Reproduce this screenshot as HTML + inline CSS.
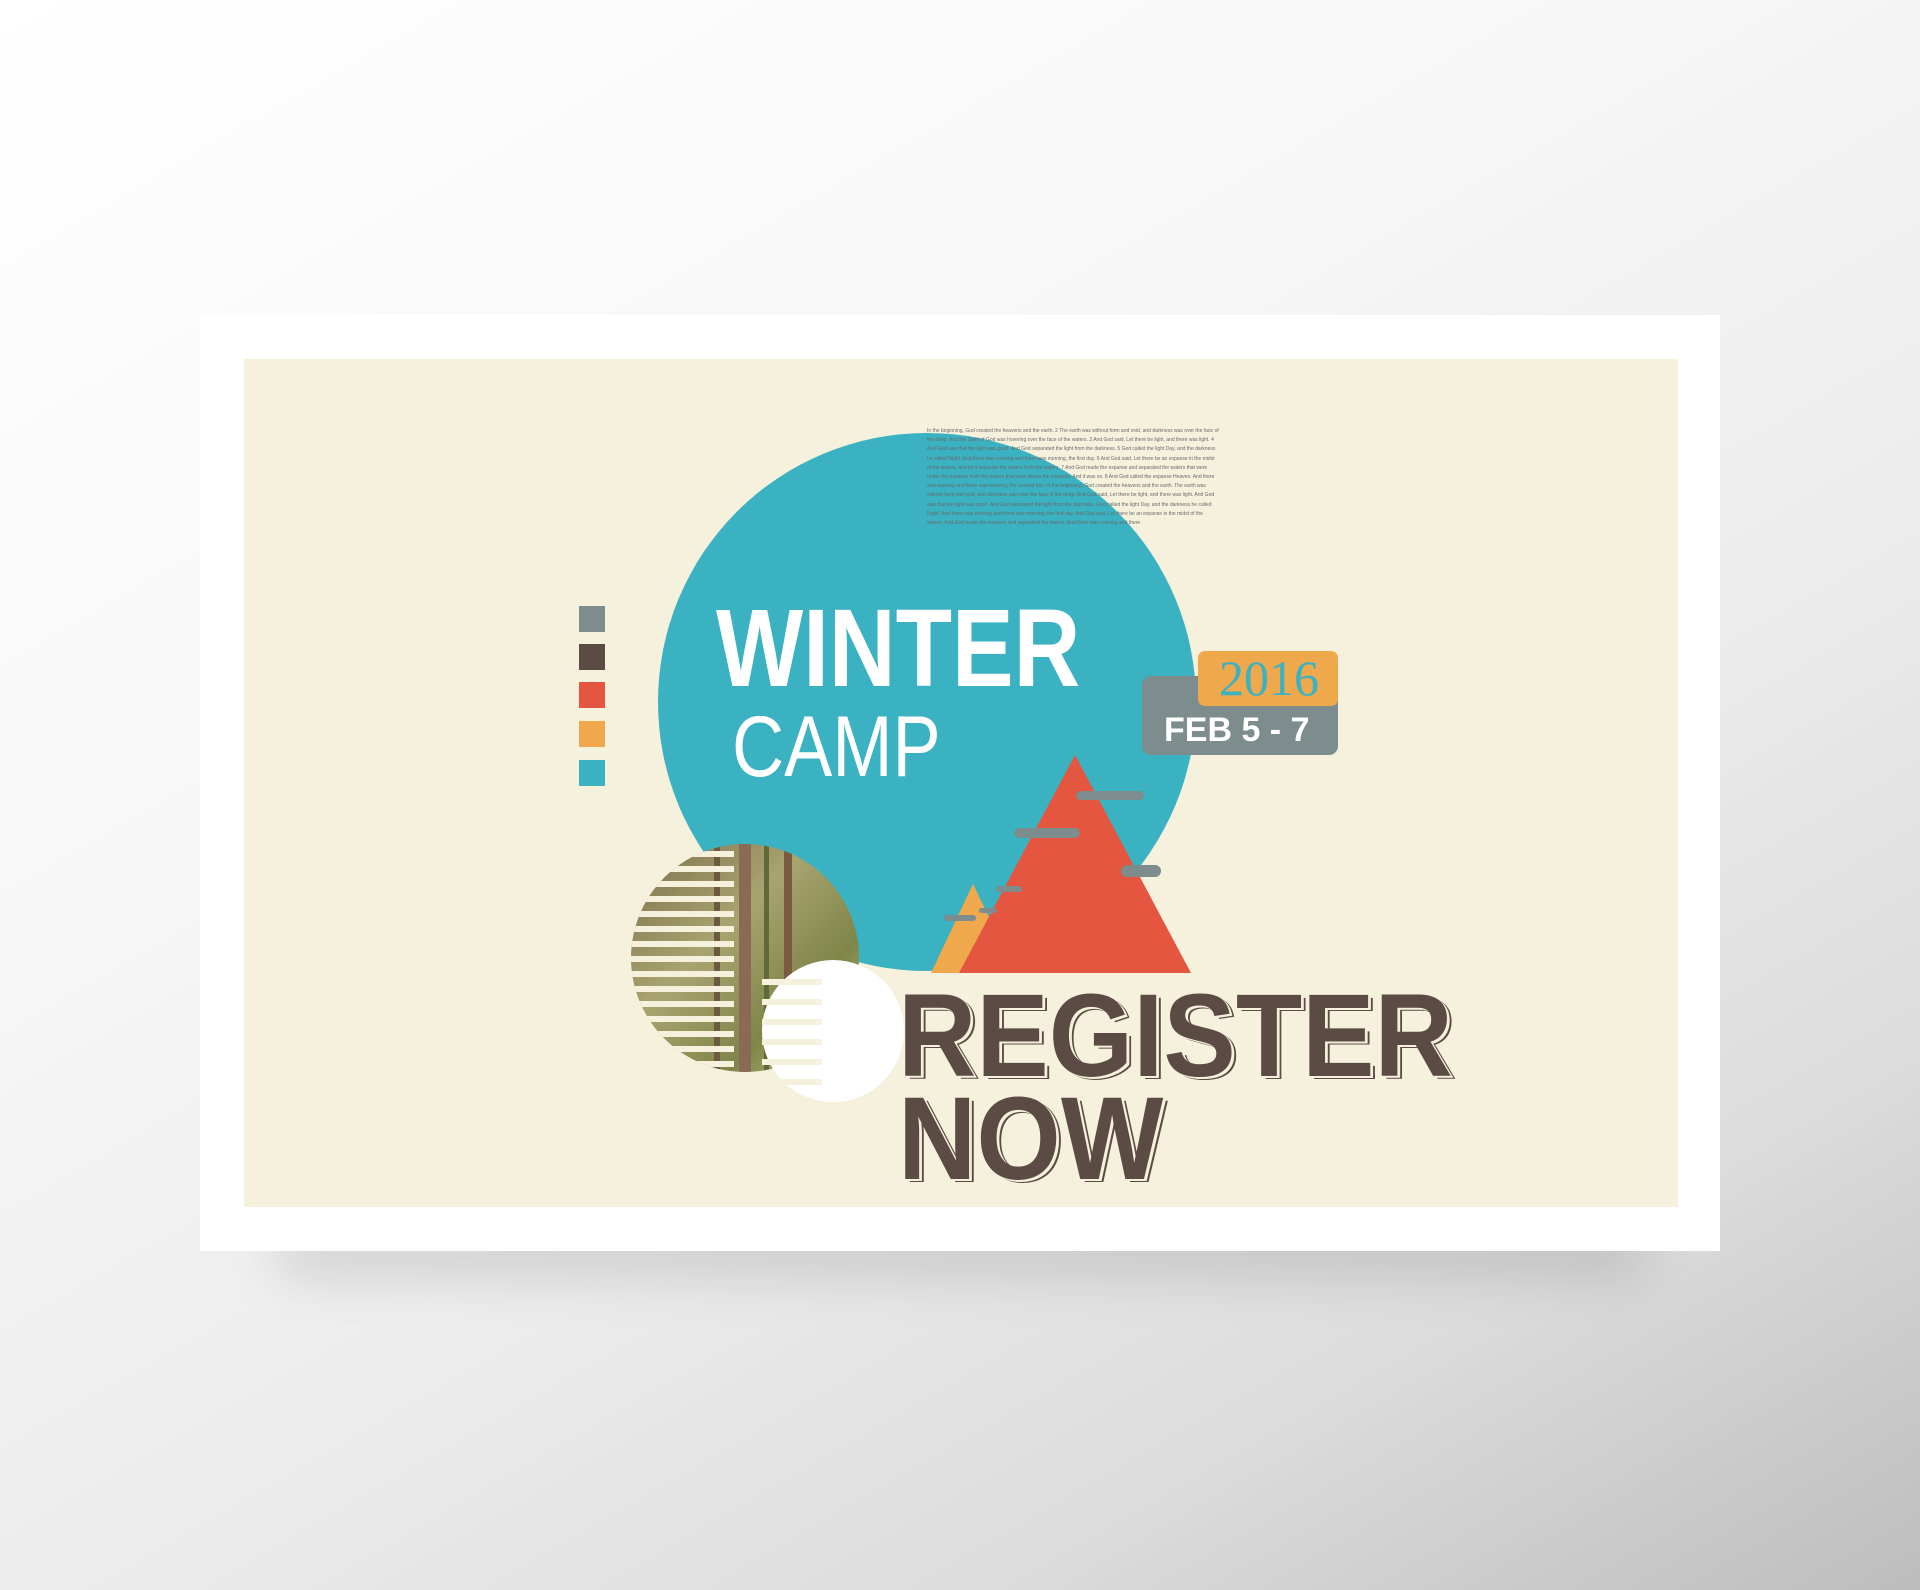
<!DOCTYPE html>
<html><head><meta charset="utf-8"><style>
html,body{margin:0;padding:0}
body{width:1920px;height:1590px;position:relative;overflow:hidden;
background:linear-gradient(150deg,#ffffff 0%,#f7f7f7 35%,#ececec 60%,#dcdcdc 80%,#bdbdbd 100%);
font-family:"Liberation Sans",sans-serif}
.shadow{position:absolute;left:280px;top:1225px;width:1360px;height:50px;background:rgba(0,0,0,.13);filter:blur(25px)}
.card{position:absolute;left:200px;top:315px;width:1520px;height:936px;background:#fff}
.cream{position:absolute;left:244px;top:359px;width:1434px;height:848px;background:#f5f1dd;overflow:hidden}
.sq{position:absolute;left:335px;width:26px;height:26px}
.t{position:absolute;color:#fff;white-space:nowrap;transform-origin:0 0}
.reg{position:absolute;color:#5c4a44;font-weight:bold;white-space:nowrap;transform-origin:0 0;
text-shadow:3px 2px 0 #f5f1dd,5px 3px 0 #5c4a44}
.small{position:absolute;left:683px;top:68px;width:292px;font-size:5px;line-height:9.2px;height:104px;overflow:hidden;color:#6a6a6a}
</style></head><body>
<div class="shadow"></div>
<div class="card"></div>
<div class="cream">
 <div class="sq" style="top:247px;background:#7d8c8d"></div>
 <div class="sq" style="top:285px;background:#5c4a44"></div>
 <div class="sq" style="top:323px;background:#e45640"></div>
 <div class="sq" style="top:362px;background:#f0a84c"></div>
 <div class="sq" style="top:401px;background:#3ab2c2"></div>
 <svg style="position:absolute;left:0;top:0" width="1434" height="848">
  <defs>
   <linearGradient id="fg" x1="0" y1="0" x2="1" y2="1">
    <stop offset="0" stop-color="#7a6a48"/><stop offset=".4" stop-color="#a8a470"/><stop offset=".7" stop-color="#7f8548"/><stop offset="1" stop-color="#d0cc9a"/>
   </linearGradient>
   <clipPath id="fc"><circle cx="501" cy="599" r="114"/></clipPath>
  </defs>
  <circle cx="683" cy="343" r="269" fill="#3ab2c2"/>
  <g clip-path="url(#fc)">
   <rect x="380" y="480" width="240" height="240" fill="url(#fg)"/>
   <rect x="495" y="480" width="12" height="240" fill="#8b6a55"/>
   <rect x="540" y="480" width="8" height="240" fill="#7a5a40"/>
   <rect x="470" y="480" width="6" height="240" fill="#6b5a40"/>
   <rect x="520" y="480" width="5" height="240" fill="#5f6a3a"/>
   <g fill="#f5f1dd">
    <rect x="380" y="492" width="110" height="6"/><rect x="380" y="507" width="110" height="6"/><rect x="380" y="522" width="110" height="6"/>
    <rect x="380" y="537" width="110" height="6"/><rect x="380" y="552" width="110" height="6"/><rect x="380" y="567" width="110" height="6"/>
    <rect x="380" y="582" width="110" height="6"/><rect x="380" y="597" width="110" height="6"/><rect x="380" y="612" width="110" height="6"/>
    <rect x="380" y="627" width="110" height="6"/><rect x="380" y="642" width="110" height="6"/><rect x="380" y="657" width="110" height="6"/>
    <rect x="380" y="672" width="110" height="6"/><rect x="380" y="687" width="110" height="6"/><rect x="380" y="702" width="110" height="6"/>
   </g>
  </g>
  <circle cx="589" cy="672" r="71" fill="#fff"/>
  <g fill="#f5f1dd"><rect x="518" y="620" width="60" height="6"/><rect x="518" y="640" width="60" height="6"/><rect x="518" y="660" width="60" height="6"/><rect x="518" y="680" width="60" height="6"/><rect x="518" y="700" width="60" height="6"/><rect x="518" y="720" width="60" height="6"/></g>
  <polygon points="729,525 687,614 772,614" fill="#f0a84c"/>
  <polygon points="831,396 715,614 947,614" fill="#e45640"/>
  <g fill="#7d8c8d">
   <rect x="832" y="432" width="68" height="9" rx="4.5"/><rect x="770" y="469" width="66" height="10" rx="5"/>
   <rect x="877" y="506" width="40" height="12" rx="6"/><rect x="752" y="527" width="26" height="6" rx="3"/>
   <rect x="700" y="556" width="32" height="6" rx="3"/><rect x="735" y="549" width="18" height="5" rx="2.5"/>
  </g>
  <rect x="898" y="317" width="196" height="79" rx="9" fill="#7d8c8d"/>
  <rect x="954" y="292" width="140" height="55" rx="7" fill="#f0a84c"/>
 </svg>
 <div class="t" style="left:957px;top:290px;width:136px;text-align:center;color:#3ab2c2;font-family:'Liberation Serif',serif;font-size:50px">2016</div>
 <div class="t" style="left:920px;top:352px;font-size:34px;font-weight:bold">FEB 5 - 7</div>
 <div class="t" style="left:472px;top:232px;font-size:110px;font-weight:bold;line-height:115px;transform:scaleX(0.84)">WINTER</div>
 <div class="t" style="left:488px;top:343px;font-size:86px;line-height:90px;transform:scaleX(0.84)">CAMP</div>
 <div class="reg" style="left:654px;top:615px;font-size:118px;line-height:125px;transform:scaleX(0.92)">REGISTER</div>
 <div class="reg" style="left:654px;top:718px;font-size:118px;line-height:125px;transform:scaleX(0.92)">NOW</div>
 <div class="small">In the beginning, God created the heavens and the earth. 2 The earth was without form and void, and darkness was over the face of the deep. And the Spirit of God was hovering over the face of the waters. 3 And God said, Let there be light, and there was light. 4 And God saw that the light was good. And God separated the light from the darkness. 5 God called the light Day, and the darkness he called Night. And there was evening and there was morning, the first day. 6 And God said, Let there be an expanse in the midst of the waters, and let it separate the waters from the waters. 7 And God made the expanse and separated the waters that were under the expanse from the waters that were above the expanse. And it was so. 8 And God called the expanse Heaven. And there was evening and there was morning, the second day. In the beginning, God created the heavens and the earth. The earth was without form and void, and darkness was over the face of the deep. And God said, Let there be light, and there was light. And God saw that the light was good. And God separated the light from the darkness. God called the light Day, and the darkness he called Night. And there was evening and there was morning, the first day. And God said, Let there be an expanse in the midst of the waters. And God made the expanse and separated the waters. And there was evening and there</div>
</div>
</body></html>
